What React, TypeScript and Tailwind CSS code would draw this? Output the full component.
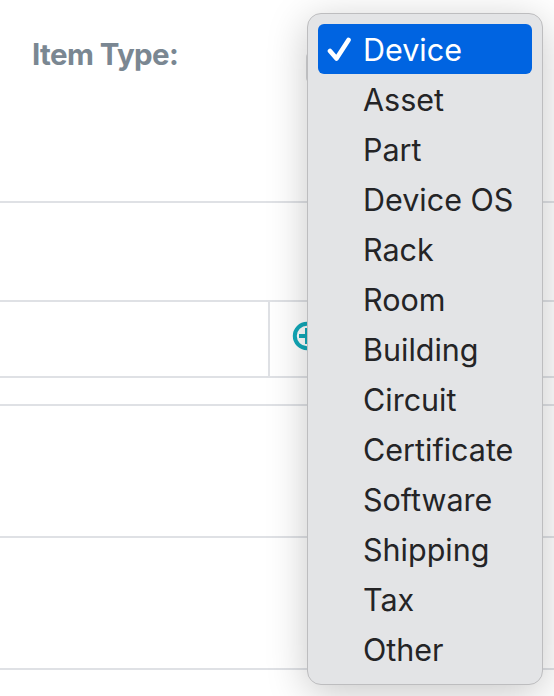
const options = [
  "Device",
  "Asset",
  "Part",
  "Device OS",
  "Rack",
  "Room",
  "Building",
  "Circuit",
  "Certificate",
  "Software",
  "Shipping",
  "Tax",
  "Other",
];

function SelectMenu() {
  return (
    <div className="absolute left-[307px] top-[13px] w-[236px] h-[672px] rounded-[14px] border border-[#bdbdbf] bg-[#e3e4e6] px-[10px] py-[10px] shadow-[0_8px_40px_rgba(0,0,0,0.22)]">
      {options.map((o, i) => (
        <div
          key={o}
          className={[
            "flex items-center h-[50px] rounded-[6px] text-[30.5px] leading-none",
            i === 0 ? "bg-[#0064e1] text-white" : "text-[#242426]",
          ].join(" ")}
        >
          <span className="w-[45px] flex pl-[9px] shrink-0">
            {i === 0 && (
              <svg width="26" height="26" viewBox="0 0 26 26" fill="none">
                <path
                  d="M3 15 L9.5 22.5 L21.5 4"
                  stroke="white"
                  strokeWidth="4.6"
                  strokeLinecap="round"
                  strokeLinejoin="round"
                />
              </svg>
            )}
          </span>
          <span className="pt-[2px]">{o}</span>
        </div>
      ))}
    </div>
  );
}

export default function App() {
  return (
    <div className="relative w-[554px] h-[696px] overflow-hidden bg-white font-['Inter',sans-serif]">
      <div className="h-[203px] border-b-2 border-[#dfe1e5] pt-[36px] pl-[32px]">
        <span className="text-[29.5px] leading-[36px] font-bold tracking-[-0.6px] text-[#7a8792]">
          Item Type:
        </span>
      </div>
      <div className="h-[99px] border-b-2 border-[#dfe1e5]" />
      <div className="flex h-[76px] border-b-2 border-[#dfe1e5]">
        <div className="w-[270px] border-r-2 border-[#dfe1e5]" />
        <div className="flex items-center pl-[22px] pb-[6px]">
          <svg width="30" height="30" viewBox="0 0 30 30" fill="none">
            <circle cx="15" cy="15" r="12.2" stroke="#12a9b9" strokeWidth="4" />
            <path d="M15 7v16M7 15h16" stroke="#12a9b9" strokeWidth="4" />
          </svg>
        </div>
      </div>
      <div className="h-[28px] border-b-2 border-[#dfe1e5]" />
      <div className="h-[132px] border-b-2 border-[#dfe1e5]" />
      <div className="h-[132px] border-b-2 border-[#dfe1e5]" />
      {/* select control peeking out from under the open menu */}
      <div className="absolute left-[306px] top-[52px] w-[20px] h-[31px] rounded-[5px] bg-[#d4d5d7]" />
      <SelectMenu />
    </div>
  );
}
